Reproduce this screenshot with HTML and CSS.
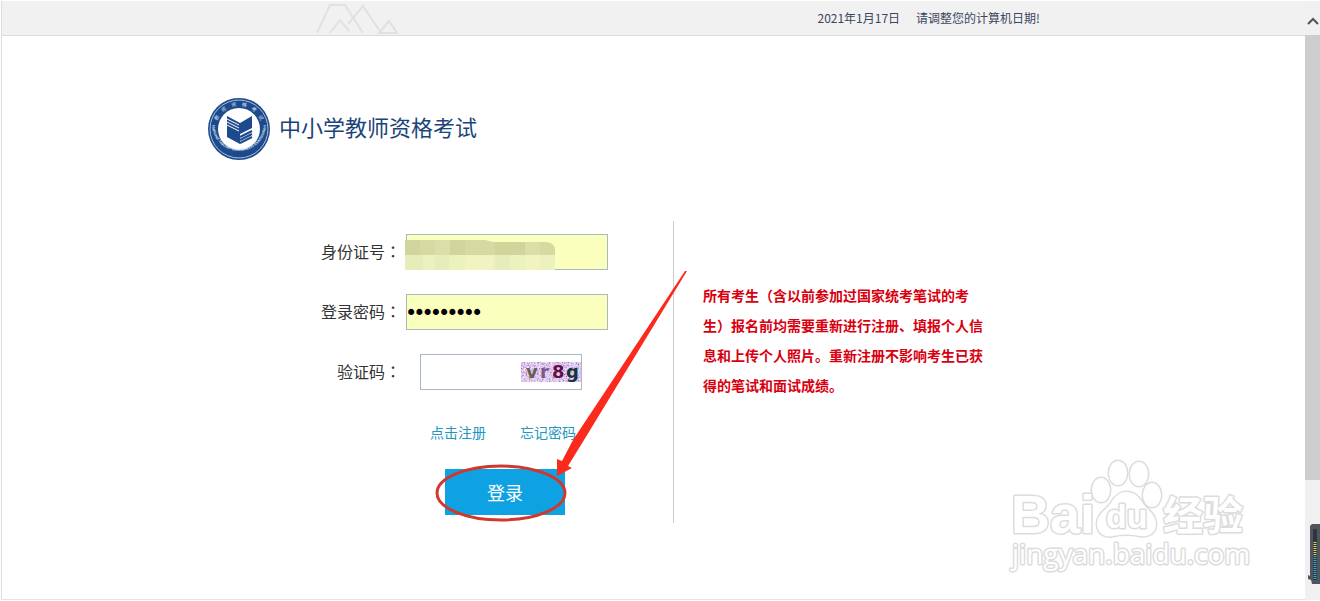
FILE: index.html
```html
<!DOCTYPE html>
<html lang="zh-CN">
<head>
    <meta charset="UTF-8">
    <meta name="viewport" content="width=device-width, initial-scale=1.0">
    <title>中小学教师资格考试</title>
    <link rel="stylesheet" href="styles.css">
</head>
<body>

<div class="window">
    <div class="page">
        <header class="topbar">
            <div class="container topbar-inner">
                <svg class="hills" width="86" height="32" viewBox="0 0 86 32" aria-hidden="true">
                    <path d="M4 31 17 3h15l18 28M17 31l10-13 9 11M35 22 50 4l18 27M66 31l10-12 8 12z"/>
                </svg>
                <p class="date"><span>2021年1月17日</span><span>请调整您的计算机日期!</span></p>
            </div>
        </header>

        <main class="container">
            <div class="brand">
                <svg class="logo" width="62" height="62" viewBox="0 0 62 62" aria-hidden="true">
                    <defs>
                        <path id="arcTop" d="M8 31a23 23 0 0 1 46 0"/>
                        <path id="arcBottom" d="M4 26a27 27 0 0 0 54 0"/>
                    </defs>
                    <circle cx="31" cy="31" r="31" fill="#1c4a8c"/>
                    <circle cx="31" cy="31" r="29" fill="none" stroke="#a9bedb" stroke-width="1"/>
                    <circle cx="31" cy="31" r="21" fill="#fff"/>
                    <text class="ring-cn"><textPath href="#arcTop" startOffset="50%" text-anchor="middle">教&emsp;师&emsp;资&emsp;格&emsp;考&emsp;试</textPath></text>
                    <text class="ring-en"><textPath href="#arcBottom" startOffset="50%" text-anchor="middle">National Teacher Certification Examination</textPath></text>
                    <path fill="#1c4a8c" d="M19 18l13 7v21l-13-7zM32 25l12-7v12l-12 6z"/>
                    <path fill="none" stroke="#1c4a8c" stroke-width="2" d="M32 39l12-6M32 42l12-6M32 45l12-6"/>
                    <path fill="none" stroke="#fff" stroke-width="1" d="M19 21l12 6M19 24l12 6M19 27l12 6"/>
                </svg>
                <h1>中小学教师资格考试</h1>
            </div>

            <div class="login">
                <form class="login-form">
                    <div class="row">
                        <label for="idNumber">身份证号<span class="mark" lang="zh-TW">：</span></label>
                        <div class="field">
                            <input class="filled" type="text" id="idNumber">
                            <svg class="mosaic" width="150" height="31" viewBox="0 0 150 31" aria-hidden="true">
                                <path fill="#d5daa1" d="M0 0h80l8 2h52q9 0 10 7v6H0z"/>
                                <path fill="#cfd59b" d="M0 0h15v15H0zM45 0h15v15H45zM90 2h15v13H90zM105 2h15v13h-15z"/>
                                <path fill="#dadfaa" d="M30 0h15v15H30zM120 2h15v13h-15z"/>
                                <path fill="#edf1bd" d="M0 15h150v15H0z"/>
                                <path fill="#e7ecba" d="M0 15h18v15H0zM30 15h14v15H30zM90 15h15v15H90z"/>
                                <path fill="#f1f4c1" d="M60 15h28v15H60zM120 15h15v15h-15z"/>
                            </svg>
                        </div>
                    </div>
                    <div class="row">
                        <label for="password">登录密码<span class="mark" lang="zh-TW">：</span></label>
                        <div class="field">
                            <input class="filled password" type="password" id="password" value="123456789">
                        </div>
                    </div>
                    <div class="row">
                        <label for="code">验证码<span class="mark" lang="zh-TW">：</span></label>
                        <div class="code-field">
                            <input type="text" id="code">
                            <svg class="captcha" width="60" height="20" viewBox="0 0 60 20" role="img" aria-label="验证码图片">
                                <filter id="noise" x="0" y="0" width="100%" height="100%">
                                    <feTurbulence type="fractalNoise" baseFrequency="0.6" numOctaves="2" seed="4"/>
                                    <feColorMatrix values="2 0 0 0 -0.3  2 0 0 0 -0.5  2 0 0 0 -0.1  0 0 0 0 1"/>
                                </filter>
                                <rect width="60" height="20" fill="#e0d4ea"/>
                                <rect width="60" height="20" filter="url(#noise)" opacity="0.5"/>
                                <text x="5" y="16" fill="#68604f">v</text>
                                <text x="19" y="16" fill="#79598a">r</text>
                                <text x="31" y="16" fill="#641044">8</text>
                                <text x="45" y="16" fill="#173440">g</text>
                            </svg>
                        </div>
                    </div>
                    <div class="links">
                        <a href="#">点击注册</a>
                        <a href="#">忘记密码</a>
                    </div>
                    <button type="submit" class="submit">登录</button>
                </form>

                <p class="notice">所有考生（含以前参加过国家统考笔试的考生）报名前均需要重新进行注册、填报个人信息和上传个人照片。重新注册不影响考生已获得的笔试和面试成绩。</p>

                <!-- red circle and arrow over the login button -->
                <svg class="pointer" width="260" height="260" viewBox="0 0 260 260" aria-hidden="true">
                    <ellipse cx="73" cy="223" rx="64" ry="27" fill="none" stroke="#d2372c" stroke-width="3"/>
                    <path fill="#fb2a1c" d="M259 1h-2L145 170l-11 21-5-2v17l15-8-4-2 16-26z"/>
                </svg>
            </div>
        </main>

        <svg class="watermark" width="244" height="130" viewBox="0 0 244 130" aria-hidden="true">
            <g class="wm-shape">
                <ellipse cx="94" cy="44" rx="9" ry="12"/>
                <ellipse cx="111" cy="27" rx="9" ry="12"/>
                <ellipse cx="132" cy="28" rx="9" ry="12"/>
                <ellipse cx="145" cy="49" rx="9" ry="12"/>
                <path d="M119 46c8 0 12 4 16 10 5 8 14 12 14 22 0 9-7 13-16 12-9-2-18-2-27 0-10 2-16-4-16-12 0-10 9-14 14-21 4-7 8-11 15-11z"/>
            </g>
            <text class="wm-bai" x="4" y="87">Bai</text>
            <text class="wm-du" x="99" y="82">du</text>
            <text class="wm-cn" x="156" y="84">经验</text>
            <text class="wm-url" x="5" y="118">jingyan.baidu.com</text>
        </svg>
    </div>

    <div class="scrollbar" aria-hidden="true">
        <svg class="scroll-up" width="15" height="34" viewBox="0 0 15 34">
            <path d="M3 23l5-5 5 5" fill="none" stroke="#555" stroke-width="2"/>
        </svg>
        <div class="thumb"></div>
        <div class="track"></div>
        <svg class="meter" width="12" height="60" viewBox="0 0 12 60">
            <path fill="#50545c" d="M4 0h8v60H4l-1-4-3-1v-4l2 1V2z"/>
            <path fill="#30343c" d="M5 5h4v51H5z"/>
            <path stroke="#d5d552" stroke-width="3" stroke-dasharray="1 1" d="M7 18v14"/>
            <path stroke="#35a5cc" stroke-width="3" stroke-dasharray="1 1" d="M7 32v23"/>
        </svg>
    </div>
</div>

</body>
</html>
```
FILE: styles.css
```css
* {
    box-sizing: border-box;
}
body {
    margin: 0;
    font-family: "Noto Sans CJK SC", sans-serif;
    color: #333;
    background-color: #fff;
}
h1, p {
    margin: 0;
}
.window {
    display: flex;
    min-height: 100vh;
    padding: 1px 0;
}
.page {
    position: relative;
    flex: 1;
    margin-left: 1px;
    border-left: 1px solid #ddd;
    border-bottom: 1px solid #e4e4e4;
}
.container {
    max-width: 891px;
    margin: 0 auto;
}
.topbar {
    background-color: #f1f1f1;
    border-bottom: 1px solid #dcdcdc;
}
.topbar-inner {
    display: flex;
    justify-content: space-between;
    align-items: center;
    height: 34px;
    padding-left: 105px;
    padding-right: 59px;
}
.hills path {
    fill: none;
    stroke: #e0e1e5;
    stroke-width: 2;
}
.date {
    display: flex;
    gap: 16px;
    padding-bottom: 2px;
    font-size: 12px;
    color: #3b4560;
}
.brand {
    display: flex;
    align-items: center;
    gap: 9px;
    padding-top: 62px;
}
.brand h1 {
    padding-bottom: 6px;
    font-size: 22px;
    line-height: 30px;
    font-weight: 400;
    color: #1b4579;
}
.ring-cn {
    font-size: 5px;
    fill: #dbe5f3;
}
.ring-en {
    font-family: "Liberation Sans", sans-serif;
    font-size: 4px;
    font-weight: bold;
    fill: #dbe5f3;
}
.login {
    position: relative;
    display: flex;
    margin-top: 61px;
}
.login-form {
    width: 466px;
    padding-top: 13px;
    padding-bottom: 8px;
    border-right: 1px solid #ccc;
}
.row {
    display: flex;
    align-items: center;
    gap: 5px;
    margin-bottom: 24px;
}
.row label {
    width: 193px;
    padding-bottom: 2px;
    font-size: 16px;
    line-height: 24px;
    text-align: right;
}
.mark {
    font-family: "Noto Sans CJK TC", sans-serif;
}
.field {
    position: relative;
    width: 202px;
}
.field input {
    display: block;
    width: 100%;
    height: 36px;
    padding: 0;
    border: 1px solid #a9b9c0;
    font-size: 14px;
}
.field .filled {
    background-color: #faffbd;
}
.field .password {
    font-family: "DejaVu Sans", sans-serif;
    color: #000;
    -webkit-text-stroke: 2px #000;
}
.mosaic {
    position: absolute;
    left: -1px;
    top: 6px;
}
.code-field {
    display: flex;
    align-items: center;
    width: 162px;
    height: 36px;
    margin-left: 14px;
    border: 1px solid #a9b9c8;
}
.code-field input {
    flex: 1;
    min-width: 0;
    height: 34px;
    border: 0;
    padding: 0 4px;
    background: none;
    font-size: 14px;
}
.captcha {
    font-family: "DejaVu Sans", sans-serif;
    font-size: 18px;
    font-weight: bold;
}
.links {
    display: flex;
    gap: 34px;
    padding-top: 8px;
    padding-left: 222px;
    font-size: 14px;
    line-height: 20px;
}
.links a {
    color: #2397bd;
    text-decoration: none;
}
.submit {
    display: block;
    width: 120px;
    height: 46px;
    margin-top: 27px;
    margin-left: 237px;
    padding: 0;
    border: 0;
    background-color: #0fa2e3;
    color: #fff;
    font-family: inherit;
    font-size: 18px;
    font-weight: 400;
    cursor: pointer;
}
.submit:hover {
    background-color: #0b8fc9;
}
.notice {
    width: 309px;
    padding-top: 59px;
    padding-left: 29px;
    font-size: 14px;
    line-height: 30px;
    font-weight: bold;
    color: #d8000f;
}
.pointer {
    position: absolute;
    left: 220px;
    top: 49px;
    pointer-events: none;
}
.watermark {
    position: absolute;
    right: 54px;
    bottom: 23px;
}
.watermark text, .wm-shape {
    fill: #fff;
    stroke: #dcdcdc;
    stroke-width: 3;
    stroke-linejoin: round;
    paint-order: stroke;
}
.wm-bai, .wm-du {
    font-family: "Liberation Sans", sans-serif;
    font-weight: bold;
}
.wm-bai {
    font-size: 54px;
}
.wm-du {
    font-size: 34px;
}
.wm-cn {
    font-size: 40px;
    font-weight: bold;
}
.wm-url {
    font-family: "Open Sans", sans-serif;
    font-size: 28px;
}
.scrollbar {
    position: relative;
    display: flex;
    flex-direction: column;
    width: 15px;
    background-color: #f0f0f0;
}
.thumb {
    flex: 445;
    background-color: #cdcdcd;
}
.track {
    flex: 120;
}
.meter {
    position: absolute;
    right: 0;
    bottom: 16px;
}
```
